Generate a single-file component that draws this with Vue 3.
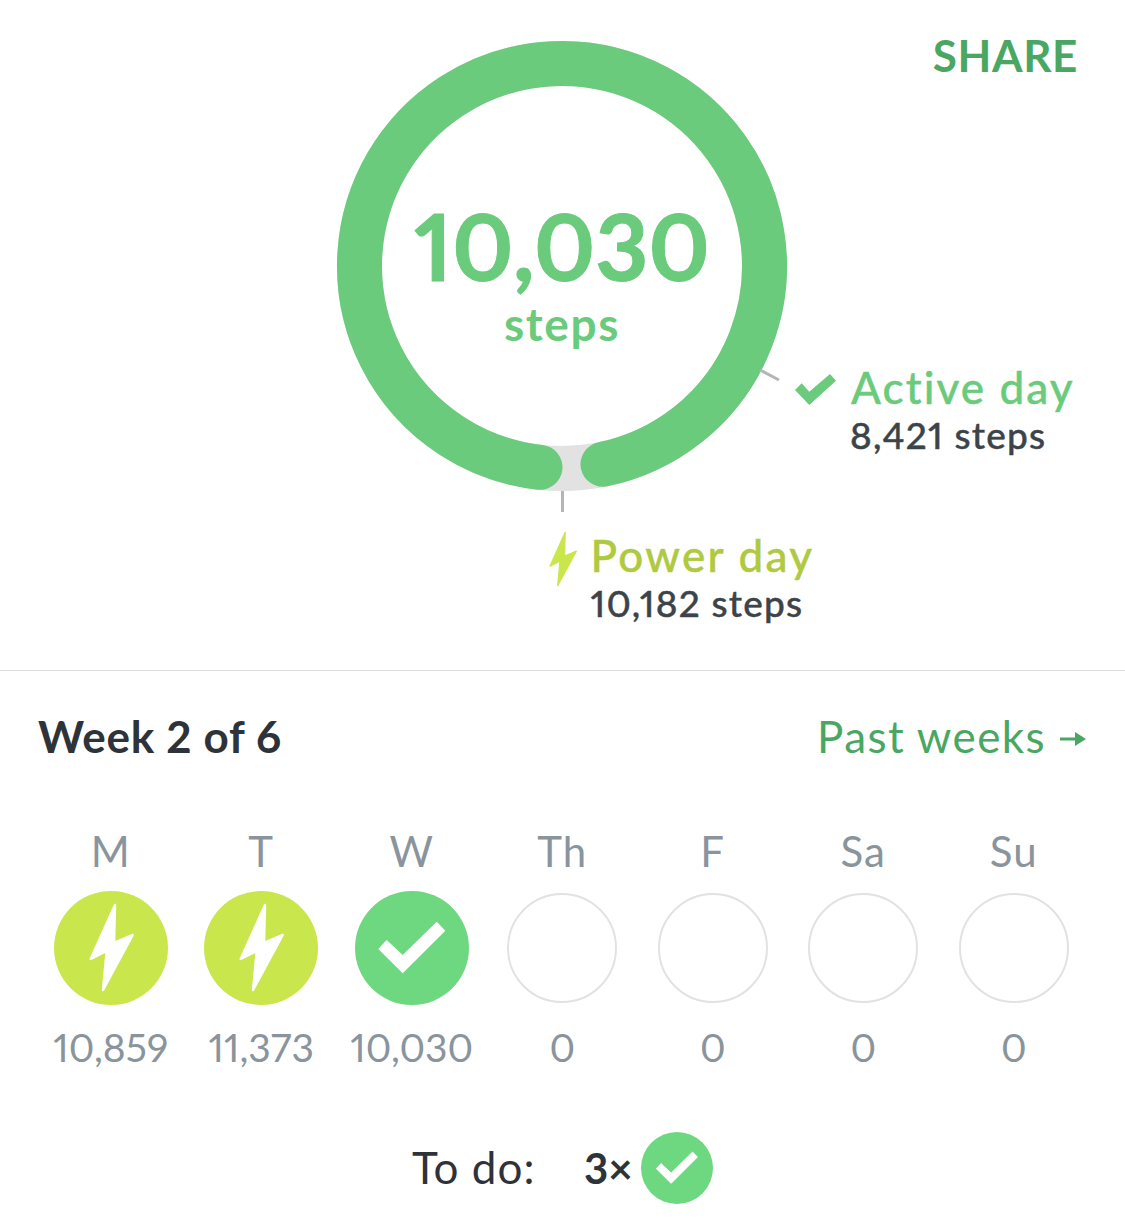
<script setup>
const days = [
  { label: 'M', value: '10,859', state: 'power' },
  { label: 'T', value: '11,373', state: 'power' },
  { label: 'W', value: '10,030', state: 'active' },
  { label: 'Th', value: '0', state: 'empty' },
  { label: 'F', value: '0', state: 'empty' },
  { label: 'Sa', value: '0', state: 'empty' },
  { label: 'Su', value: '0', state: 'empty' }
]
const bolt = '61,14 60,52 78.7,44 49,99 52.7,60 36.7,68'
const check = '24.3,58 31.7,50 47.7,65 81.7,31.7 89.3,39.7 47.7,81.3'
</script>

<template>
  <main class="page">
    <section class="hero">
      <a class="share">SHARE</a>
      <div class="ring-wrap">
        <svg class="ring" width="450" height="450" viewBox="0 0 450 450">
          <circle cx="225" cy="225" r="202.5" fill="none" stroke="#e2e2e2" stroke-width="45" />
          <path d="M 203 426.3 A 202.5 202.5 0 1 1 266 423.3" fill="none" stroke="#69cb7b" stroke-width="45" stroke-linecap="round" />
          <line x1="225.500" y1="450" x2="225.500" y2="471" stroke="#b5b5b5" stroke-width="3" />
          <line x1="423" y1="329" x2="442" y2="339" stroke="#b5b5b5" stroke-width="3" />
        </svg>
        <div class="count">
          <div class="count-num">10,030</div>
          <div class="count-unit">steps</div>
        </div>
        <div class="callout callout-active">
          <svg class="callout-icon" width="42" height="32" viewBox="0 0 42 32">
            <polygon points="0,16 6.700,9.300 14.300,17.700 35,0 41,6.700 14.300,31" fill="#69cb7b" />
          </svg>
          <div class="callout-title active">Active day</div>
          <div class="callout-sub sub-active">8,421 steps</div>
        </div>
        <div class="callout callout-power">
          <svg class="callout-icon" width="30" height="56" viewBox="34 12 47 89">
            <polygon :points="bolt" fill="#c9e64c" stroke="#c9e64c" stroke-width="2" stroke-linejoin="round" />
          </svg>
          <div class="callout-title power">Power day</div>
          <div class="callout-sub">10,182 steps</div>
        </div>
      </div>
    </section>

    <section class="week">
      <header class="week-head">
        <h2>Week 2 of 6</h2>
        <a class="past">Past weeks
          <svg class="arrow" width="28" height="18" viewBox="0 0 28 18">
            <path d="M1 9H18" stroke="#4aa763" stroke-width="3" fill="none" />
            <polygon points="16,2 27,9 16,16" fill="#4aa763" />
          </svg>
        </a>
      </header>

      <div class="days">
        <div v-for="day in days" :key="day.label" class="day">
          <div class="day-label">{{ day.label }}</div>
          <div class="badge" :class="day.state">
            <svg v-if="day.state !== 'empty'" width="114" height="114" viewBox="0 0 114 114">
              <polygon v-if="day.state === 'power'" :points="bolt" fill="#fff" stroke="#fff" stroke-width="2.5" stroke-linejoin="round" />
              <polygon v-else :points="check" fill="#fff" stroke="#fff" stroke-width="1.5" stroke-linejoin="round" />
            </svg>
          </div>
          <div class="day-value">{{ day.value }}</div>
        </div>
      </div>

      <div class="todo">
        <span class="todo-label">To do:</span>
        <span class="todo-count">3×</span>
        <div class="badge active small">
          <svg width="72" height="72" viewBox="0 0 114 114">
            <polygon :points="check" fill="#fff" stroke="#fff" stroke-width="1.5" stroke-linejoin="round" />
          </svg>
        </div>
      </div>
    </section>
  </main>
</template>

<style>
html, body { margin: 0; background: #fff; }
</style>

<style scoped>
.page {
  width: 1125px;
  height: 1225px;
  overflow: hidden;
  font-family: Lato, "Noto Sans", sans-serif;
  color: #2d3338;
  background: #fff;
  font-variant-numeric: proportional-nums;
}
.hero {
  position: relative;
  height: 671px;
  box-sizing: border-box;
  padding-top: 41px;
  border-bottom: 1px solid #dcdcdc;
}
.share {
  position: absolute;
  top: 29px;
  right: 47px;
  font-size: 44px;
  line-height: 52px;
  font-weight: 700;
  letter-spacing: 0.6px;
  color: #4aa763;
}
.ring-wrap {
  position: relative;
  width: 450px;
  height: 450px;
  margin-left: 337px;
}
.ring { display: block; overflow: visible; }
.count {
  position: absolute;
  inset: 0;
  display: flex;
  flex-direction: column;
  align-items: center;
  padding-top: 155px;
  box-sizing: border-box;
  color: #69cb7b;
}
.count-num { font-size: 92px; line-height: 100px; font-weight: 700; -webkit-text-stroke: 1px #69cb7b; }
.count-unit { font-size: 46px; line-height: 52px; font-weight: 700; margin-top: 2px; letter-spacing: 1.6px; }
.callout { position: absolute; white-space: nowrap; -webkit-text-stroke: 0.4px currentColor; }
.callout-active { left: 514px; top: 320px; }
.callout-power { left: 253.500px; top: 488px; }
.callout-icon { position: absolute; }
.callout-active .callout-icon { left: -56px; top: 13px; }
.callout-power .callout-icon { left: -43px; top: 2px; }
.callout-title { font-size: 44px; line-height: 52px; font-weight: 500; letter-spacing: 2.3px; }
.callout-title.active { color: #69cb7b; letter-spacing: 2.1px; }
.callout-title.power { color: #afc940; }
.callout-sub { font-size: 37px; line-height: 44px; font-weight: 500; color: #3c4449; letter-spacing: 1.2px; }
.sub-active { margin-left: -1px; }

.week { display: flex; flex-direction: column; }
.week-head {
  display: flex;
  justify-content: space-between;
  align-items: center;
  padding: 39px 38px 1px;
  height: 52px;
}
h2 { margin: 0; font-size: 44px; line-height: 52px; font-weight: 700; color: #2d3338; letter-spacing: 0.7px; }
.past {
  display: flex;
  align-items: center;
  gap: 13px;
  font-size: 44px;
  line-height: 52px;
  font-weight: 400;
  letter-spacing: 1.4px;
  color: #4aa763;
}
.arrow { position: relative; top: 3px; }
.days {
  display: grid;
  grid-template-columns: repeat(7, 150.5px);
  margin: 63px 0 0 35.5px;
}
.day { display: flex; flex-direction: column; align-items: center; }
.day-label { font-size: 42px; line-height: 50px; font-weight: 400; color: #8a949c; margin-bottom: 15px; letter-spacing: 1px; }
.day-value { font-size: 39px; line-height: 50px; font-weight: 400; color: #8a949c; margin-top: 17px; }
.badge {
  width: 114px;
  height: 114px;
  border-radius: 50%;
  box-sizing: border-box;
  flex: none;
}
.badge svg { display: block; }
.badge.power { background: #c9e64c; }
.badge.active { background: #6dd87f; }
.badge.empty { border: 2px solid #e2e2e2; width: 110px; height: 110px; margin: 2px; }
.badge.small { width: 72px; height: 72px; }
.todo {
  display: flex;
  align-items: center;
  margin: 60px 0 0 412px;
}
.todo-label { font-size: 44px; line-height: 52px; font-weight: 400; color: #2d3338; width: 172px; letter-spacing: 1px; margin-bottom: 2px; }
.todo-count { font-size: 42px; line-height: 52px; font-weight: 700; color: #2d3338; width: 57px; }
</style>
